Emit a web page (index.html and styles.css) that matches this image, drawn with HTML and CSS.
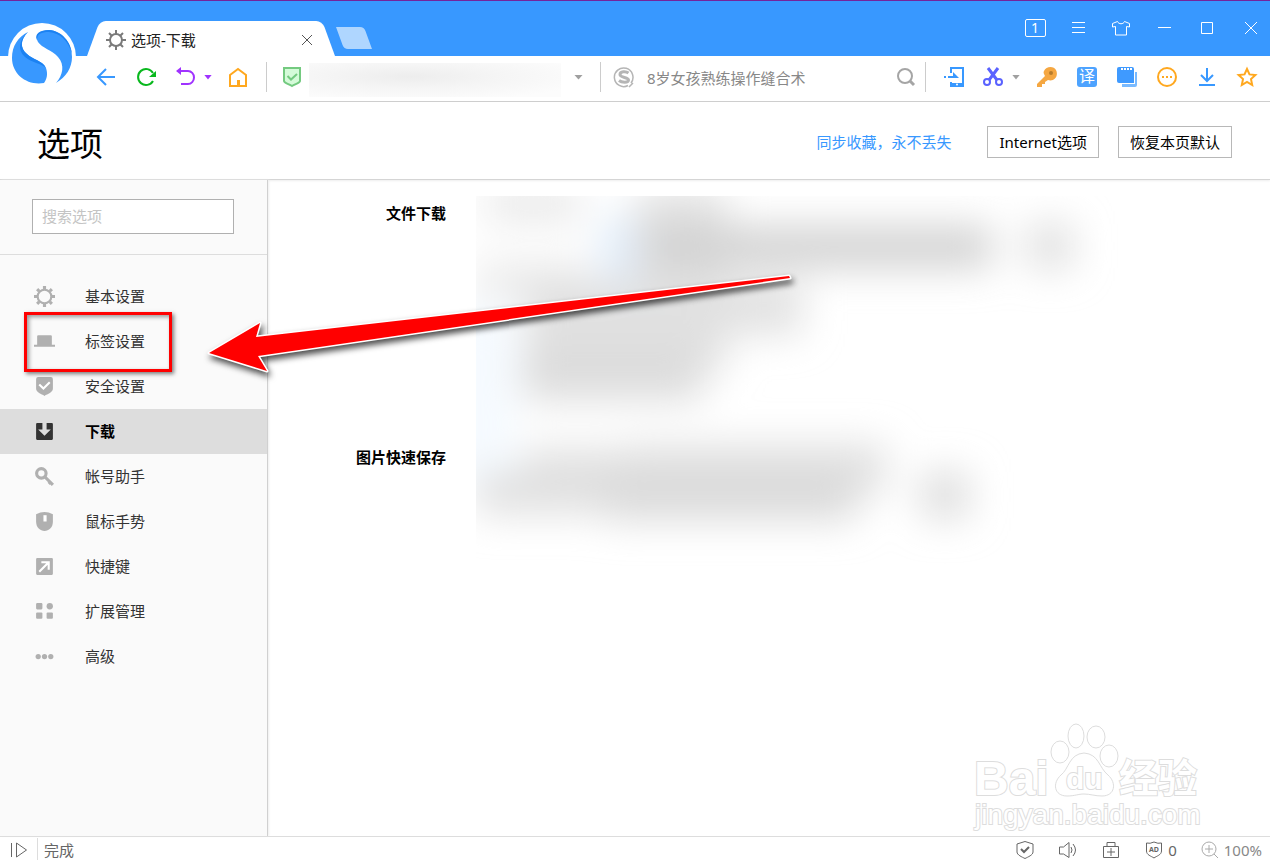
FILE: index.html
```
<!DOCTYPE html>
<html lang="zh-CN">
<head>
    <meta charset="UTF-8">
    <title>选项-下载</title>
    <link rel="stylesheet" href="styles.css">
</head>
<body>
    <div class="browser">
        <svg class="logo" viewBox="0 0 84 96">
            <circle cx="42" cy="57" r="34" fill="#fff"/>
            <path fill="#3898ff" d="M28 32C20 40 20 48 27 54C33 60 42 60 46 68C48 74 47 79 44 83C28 86 12 75 12 58C12 46 18 37 28 32Z"/>
            <path fill="#1c82f2" d="M28 32C20 40 20 48 27 54C33 60 42 60 46 68C43 64 32 63 25 57C17 50 19 40 28 32Z"/>
            <path fill="#3898ff" d="M56 83C63 75 65 65 58 57C52 50 42 48 38 42C34 35 40 30 49 30C62 31 72 43 72 57C72 68 66 77 56 83Z"/>
            <path fill="#1c82f2" d="M37 40C34 34 40 30 49 30C62 31 71 42 72 54C68 40 60 33 49 32C41 32 37 34 37 40Z"/>
        </svg>

        <div class="titlebar">
            <div class="tab">
                <svg width="20" height="20" viewBox="0 0 20 20" fill="none" stroke="#7a7a7a" stroke-width="2">
                    <circle cx="10" cy="10" r="6"/>
                    <path d="M10 0v4M10 16v4M0 10h4M16 10h4M3 3l3 3M14 14l3 3M17 3l-3 3M3 17l3-3"/>
                </svg>
                <span class="tab-title">选项-下载</span>
                <button class="tab-close" aria-label="关闭标签">
                    <svg width="12" height="12" viewBox="0 0 12 12" stroke="#555" fill="none"><path d="M1 1l10 10M11 1L1 11"/></svg>
                </button>
            </div>
            <button class="new-tab" aria-label="新标签"></button>
            <div class="window-buttons">
                <button class="count"><span>1</span></button>
                <button aria-label="菜单"><svg width="20" height="20" viewBox="0 0 20 20"><path d="M4 4.500h13M4 9.500h13M4 14.500h13"/></svg></button>
                <button aria-label="皮肤"><svg width="20" height="20" viewBox="0 0 20 20"><path d="M6.500 3.500L1.500 5.500v3.500l3-.5v8.500h11V8.500l3 .5V5.500L13.500 3.500C12.500 6.500 7.500 6.500 6.500 3.500Z"/></svg></button>
                <button aria-label="最小化"><svg width="20" height="20" viewBox="0 0 20 20"><path d="M4 9.500h13"/></svg></button>
                <button aria-label="最大化"><svg width="20" height="20" viewBox="0 0 20 20"><path d="M4.500 4.500h11v11h-11z"/></svg></button>
                <button aria-label="关闭"><svg width="20" height="20" viewBox="0 0 20 20"><path d="M5 4l12 12M17 4L5 16"/></svg></button>
            </div>
        </div>

        <div class="toolbar">
            <button class="tool" aria-label="后退"><svg width="20" height="20" viewBox="0 0 20 20" fill="none" stroke="#3898ff" stroke-width="2"><path d="M19 10H2M10 2L2 10l8 8"/></svg></button>
            <button class="tool" aria-label="刷新"><svg width="20" height="20" viewBox="0 0 20 20" fill="none" stroke="#09b81e" stroke-width="2"><path d="M17 14A8 8 0 1 1 17 6"/><path fill="#09b81e" stroke="none" d="M20 4v6h-7z"/></svg></button>
            <button class="tool undo" aria-label="恢复"><svg width="20" height="20" viewBox="0 0 20 20" fill="none" stroke="#a033ff" stroke-width="2"><path d="M2 4h11a6 6.500 0 0 1 0 13H6"/><path fill="#a033ff" stroke="none" d="M6 0v8L1 4z"/></svg></button>
            <button class="caret purple" aria-label="恢复列表"></button>
            <button class="tool" aria-label="主页"><svg width="20" height="20" viewBox="0 0 20 20" fill="none" stroke="#ffa81f" stroke-width="2"><path d="M2 8l8-6 8 6v11H2z"/><path stroke-width="3" d="M10.500 18v-5"/></svg></button>
            <div class="address">
                <svg width="20" height="22" viewBox="0 0 20 22" fill="#d5fbd9" stroke="#74ca80" stroke-width="2"><path d="M2 2h16v13c0 2-5 3-8 5c-3-2-8-3-8-5z"/><path fill="none" d="M5.500 10l3.500 3.500L15 8"/></svg>
                <input class="url" type="text" aria-label="地址">
                <button class="caret" aria-label="地址列表"></button>
            </div>
            <div class="search">
                <svg width="22" height="22" viewBox="0 0 22 22" fill="none" stroke="#b5b5b5"><path stroke-width="1.500" d="M15 19.500a9.300 9.300 0 1 1 3-2.500M16 21l4-4"/><path stroke-width="3" d="M15.500 7C13 5 7 5 7 8.500S15.500 11 15.500 14S8.500 16.500 6 14.500"/></svg>
                <input type="text" aria-label="搜索" placeholder="8岁女孩熟练操作缝合术">
                <button aria-label="搜索"><svg width="20" height="20" viewBox="0 0 20 20" fill="none" stroke="#a5a5a5" stroke-width="2"><circle cx="9" cy="9" r="7"/><path stroke-width="3" d="M14 14l4 4"/></svg></button>
            </div>
            <div class="plugins">
                <button class="tool" aria-label="发送到手机"><svg width="22" height="22" viewBox="0 0 22 22" fill="none" stroke="#3898ff" stroke-width="2"><path d="M8 7V2h12v18H8v-4"/><path d="M8 18.500h12" stroke-width="3"/><path d="M1 11h2M5 11h5"/><path fill="#3898ff" stroke="none" d="M10 6l6 6h-6z"/><circle cx="14" cy="18.500" r="1" fill="#fff" stroke="none"/></svg></button>
                <button class="tool cut" aria-label="截图"><svg width="20" height="20" viewBox="0 0 20 20" fill="none" stroke="#5a62ff" stroke-width="2"><circle cx="4" cy="15" r="3"/><circle cx="16" cy="15" r="3"/><path stroke-width="3" d="M5 1l9 12M15 1L6 13"/></svg></button>
                <button class="caret small" aria-label="截图列表"></button>
                <button class="tool" aria-label="登录管家"><svg width="22" height="22" viewBox="0 0 22 22"><path fill="#f5a742" d="M8 5C10 0 18 0 20 4c3 6-2 12-8 10l-3 2v2H6v3H1v-3l8-8C8 8 7 7 8 5Z"/><circle cx="15" cy="7" r="2" fill="#b87c2c"/></svg></button>
                <button class="tool" aria-label="翻译"><span class="translate">译</span></button>
                <button class="tool" aria-label="窗口"><svg width="22" height="22" viewBox="0 0 22 22"><path fill="#3f9aff" d="M1 3q0-2 2-2h13q2 0 2 2v14H3q-2 0-2-2z"/><path fill="#79baff" d="M19 6h2v13q0 2-2 2H6v-3h13z"/><path stroke="#fff" stroke-width="2" stroke-dasharray="2 1" d="M5 3h11"/></svg></button>
                <button class="tool" aria-label="更多"><svg width="22" height="22" viewBox="0 0 22 22" fill="none" stroke="#ffa81f" stroke-width="2"><circle cx="11" cy="11" r="9"/><path stroke-dasharray="2 2" d="M6 11h10"/></svg></button>
                <button class="tool" aria-label="下载"><svg width="20" height="20" viewBox="0 0 20 20" fill="none" stroke="#3898ff" stroke-width="2"><path d="M10 1v13M4 8l6 6 6-6M2 18h16"/></svg></button>
                <button class="tool" aria-label="收藏"><svg width="22" height="22" viewBox="0 0 22 22" fill="none" stroke="#ffa81f" stroke-width="2"><path d="M11 3l2.500 5.400 5.900.7-4.400 4 1.200 5.900-5.200-3-5.200 3 1.200-5.900-4.400-4 5.900-.7z"/></svg></button>
            </div>
        </div>

        <header class="header">
            <h1>选项</h1>
            <a href="#">同步收藏，永不丢失</a>
            <button>Internet选项</button>
            <button>恢复本页默认</button>
        </header>

        <div class="main">
            <aside class="sidebar">
                <div class="filter"><input type="text" placeholder="搜索选项" aria-label="搜索选项"></div>
                <nav>
                    <a href="#"><svg viewBox="0 0 20 20" fill="none" stroke="#b0b0b0" stroke-width="3"><circle cx="10" cy="10" r="6.500" stroke-width="2"/><path d="M10 0v3M10 17v3M0 10h3M17 10h3M3 3l2 2M15 15l2 2M17 3l-2 2M3 17l2-2"/></svg>基本设置</a>
                    <a href="#"><svg viewBox="0 0 20 20" fill="#b0b0b0"><path d="M3 5q0-1 1-1h12q1 0 1 1v8h3v2H0v-2h3z"/></svg>标签设置</a>
                    <a href="#"><svg viewBox="0 0 20 20" fill="#b0b0b0"><path d="M2 3q0-2 2-2h12q2 0 2 2v9c0 4-5 5-8 7c-3-2-8-3-8-7z"/><path d="M5 8l4 4 6-6" fill="none" stroke="#fff" stroke-width="2"/></svg>安全设置</a>
                    <a href="#" class="active"><svg viewBox="0 0 20 20" fill="#333"><path d="M3 2h5v6H4l6 6 6-6h-4V2h5q1 0 1 1v14q0 1-1 1H3q-1 0-1-1V3q0-1 1-1z"/></svg>下载</a>
                    <a href="#"><svg viewBox="0 0 20 20" fill="none" stroke="#b0b0b0"><circle cx="7" cy="7" r="4.500" stroke-width="3"/><path stroke-width="3" d="M10 10l8 8M14 17l2-2"/></svg>帐号助手</a>
                    <a href="#"><svg viewBox="0 0 20 20"><path fill="#b0b0b0" d="M2 3Q10-1 18 3v7C18 22 2 22 2 10z"/><path fill="#fff" d="M9 4h3v6H9z"/></svg>鼠标手势</a>
                    <a href="#"><svg viewBox="0 0 20 20"><rect x="2" y="2" width="16" height="16" rx="1" fill="#b0b0b0"/><path fill="none" stroke="#fff" stroke-width="2" d="M5 15L14 6M7 6h7v7"/></svg>快捷键</a>
                    <a href="#"><svg viewBox="0 0 20 20" fill="#b0b0b0"><rect x="2" y="2" width="6" height="6" rx="1"/><circle cx="15" cy="5" r="3"/><rect x="2" y="11" width="6" height="6" rx="1"/><rect x="12" y="11" width="6" height="6" rx="1"/></svg>扩展管理</a>
                    <a href="#"><svg viewBox="0 0 20 20" fill="#b0b0b0"><circle cx="4" cy="10" r="2.500"/><circle cx="10" cy="10" r="2.500"/><circle cx="16" cy="10" r="2.500"/></svg>高级</a>
                </nav>
            </aside>

            <main class="content">
                <h2>文件下载</h2>
                <h2>图片快速保存</h2>
                <!-- blurred settings -->
                <svg class="blurred" viewBox="0 0 660 370">
                    <defs>
                        <filter id="blur" x="-30%" y="-30%" width="160%" height="160%"><feGaussianBlur stdDeviation="19"/></filter>
                    </defs>
                    <g filter="url(#blur)" fill="#e1e1e1">
                        <rect x="10" y="-10" width="95" height="36" fill="#e9e9e9"/>
                        <rect x="160" y="-6" width="90" height="90"/>
                        <rect x="170" y="30" width="346" height="42" fill="#d2d2d2"/>
                        <rect x="552" y="28" width="44" height="44" fill="#dedede"/>
                        <rect x="124" y="20" width="34" height="80" fill="#e1edfa"/>
                        <rect x="0" y="64" width="110" height="40" fill="#ececec"/>
                        <rect x="50" y="84" width="200" height="90"/>
                        <rect x="200" y="86" width="126" height="52"/>
                        <rect x="-30" y="110" width="68" height="180" fill="#f5faff"/>
                        <rect x="46" y="150" width="180" height="54" fill="#dcdcdc"/>
                        <rect x="46" y="252" width="120" height="36"/>
                        <rect x="150" y="248" width="260" height="50"/>
                        <rect x="0" y="276" width="150" height="42" fill="#e0e0e0"/>
                        <rect x="130" y="276" width="250" height="48" fill="#dadada"/>
                        <rect x="446" y="276" width="46" height="46" fill="#dcdcdc"/>
                    </g>
                </svg>
            </main>
        </div>

        <footer class="statusbar">
            <button class="side-toggle" aria-label="侧边栏"><svg width="18" height="18" viewBox="0 0 18 18"><path d="M1.500 2v14M6.500 2v14l10-7z"/></svg></button>
            <span class="state">完成</span>
            <button aria-label="安全"><svg width="18" height="18" viewBox="0 0 18 18"><path d="M9 .5L17 3v8c0 3-5 5-8 6.500C6 16 1 14 1 11V3z"/><path stroke-width="2" d="M5 8l3 3 5-5"/></svg></button>
            <button aria-label="声音"><svg width="18" height="18" viewBox="0 0 18 18"><path d="M.5 6h4L10 1.500v15L4.500 13h-4zM12 6q2 3 0 6M14 3q5 6 0 12"/></svg></button>
            <button aria-label="工具箱"><svg width="18" height="18" viewBox="0 0 18 18"><path d="M1.500 5.500h15v11h-15zM5 5V1.500h8V5M9 7v8M5 11h8"/></svg></button>
            <button class="ads"><svg width="16" height="18" viewBox="0 0 16 18"><path d="M8 1q4 2 7.500 1v8c0 4-5 5-7.500 7C5 15 .5 14 .5 10V2Q4 3 8 1z"/><text x="8" y="11">AD</text></svg>0</button>
            <button class="zoom"><svg width="18" height="18" viewBox="0 0 18 18"><circle cx="8" cy="8" r="7"/><path d="M8 4v8M4 8h8M13 13l4 4"/></svg>100%</button>
        </footer>

        <div class="highlight"></div>
        <svg class="arrow" width="600" height="120" viewBox="0 0 600 120">
            <path class="edge" d="M9 83L60 53 56 67 589 6 590 8 58 86 67 101Z"/>
            <path d="M9 83L60 53 56 67 589 6 590 8 58 86 67 101Z"/>
        </svg>
        <svg class="watermark" width="235" height="114" viewBox="0 0 235 114">
            <text class="wm-latin" x="4" y="75">Bai</text>
            <ellipse cx="90" cy="32" rx="9" ry="11"/>
            <ellipse cx="106" cy="16" rx="8" ry="12"/>
            <ellipse cx="126" cy="17" rx="9" ry="11"/>
            <ellipse cx="139" cy="36" rx="9" ry="11"/>
            <path d="M114 33C99 34 99 49 91 55C82 63 84 76 97 76C105 76 108 74 114 74C120 74 125 76 132 76C145 76 147 63 138 55C129 48 129 34 114 33Z"/>
            <text class="wm-du" x="96" y="69">du</text>
            <text class="wm-cjk" x="149" y="72">经验</text>
            <text class="wm-url" x="5" y="104">jingyan.baidu.com</text>
        </svg>
    </div>
</body>
</html>
```
FILE: styles.css
```
* { box-sizing: border-box; }
body { margin: 0; font-family: "Noto Sans", "Noto Sans CJK SC", sans-serif; font-size: 15px; color: #333; background: #fff; }
button { display: flex; align-items: center; justify-content: center; padding: 0; border: none; background: none; font: inherit; color: inherit; cursor: pointer; }
input { font: inherit; border: none; outline: none; padding: 0; min-width: 0; background: none; }
a { text-decoration: none; }
svg { flex: none; }
.browser { position: relative; display: flex; flex-direction: column; min-height: 100vh; overflow: hidden; }
.logo { position: absolute; left: 0; top: 0; width: 84px; height: 96px; z-index: 2; }

/* title bar */
.titlebar { display: flex; align-items: flex-end; height: 56px; padding-left: 87px; background: #3898ff; border-top: 1px solid #74249c; }
.tab { position: relative; z-index: 0; display: flex; align-items: center; width: 248px; height: 35px; padding: 2px 22px 0 19px; }
.tab::before, .tab::after { content: ""; position: absolute; z-index: -1; top: 0; bottom: 0; width: 60%; background: #fff; transform-origin: bottom; }
.tab::before { left: 0; transform: skewX(-20deg); border-top-left-radius: 6px; }
.tab::after { right: 0; transform: skewX(20deg); border-top-right-radius: 6px; }
.tab-title { flex: 1; margin-left: 5px; color: #222; }
.new-tab { width: 28px; height: 22px; margin: 0 0 7px 5px; background: #afd6ff; transform: skewX(20deg); border-radius: 0 4px 0 4px; }
.window-buttons { display: flex; margin-left: auto; align-self: stretch; padding-bottom: 2px; }
.window-buttons button { width: 43px; margin-right: -1px; padding-left: 1px; color: #fff; }
.window-buttons button { margin-right: 0; padding-left: 3px; }
.window-buttons svg { fill: none; stroke: #fff; }
.count span { width: 21px; height: 18px; line-height: 16px; border: 1px solid #fff; border-radius: 2px; font-size: 14px; }

/* toolbar */
.toolbar { display: flex; align-items: center; height: 46px; padding: 0 3px 3px 86px; border-bottom: 1px solid #ccc; }
.tool { width: 40px; height: 30px; }
.undo, .cut { width: 38px; }
.caret { width: 8px; height: 5px; background: #a0a0a0; clip-path: polygon(0 0, 100% 0, 50% 100%); }
.caret.purple { margin-right: 6px; background: #a033ff; }
.caret.small { margin-right: 7px; }
.address { display: flex; flex: 1; align-items: center; height: 30px; margin-left: 8px; padding: 0 17px 0 15px; border-left: 1px solid #ccc; }
.address .caret { margin-left: 13px; width: 9px; }
.url { flex: 1; height: 34px; margin: 6px 0 0 7px; background: radial-gradient(ellipse at 40% 40%, #ededed, #f5f5f5 40%, #fcfcfc 85%); }
.search { display: flex; align-items: center; width: 326px; height: 30px; padding: 0 9px 0 12px; border: 1px solid #ccc; border-width: 0 1px; }
.search input { flex: 1; margin: 2px 0 0 12px; }
.search input::placeholder { color: #888; opacity: 1; }
.plugins { display: flex; align-items: center; padding-left: 8px; }
.translate { width: 20px; height: 20px; border-radius: 3px; background: #4da3ff; color: #fff; font-size: 16px; line-height: 19px; text-align: center; }

/* page header */
.header { display: flex; align-items: center; height: 78px; padding: 2px 38px 0 37px; border-bottom: 1px solid #d5d5d5; box-shadow: 0 1px 2px #eee; }
.header h1 { flex: 1; margin: 0; font-size: 33px; font-weight: 400; line-height: 48px; color: #000; padding-top: 4px; }
.header a { margin-right: 17px; color: #3898ff; }
.header button { height: 32px; margin-left: 19px; padding: 0 11px; border: 1px solid #b8b8b8; background: #fff; color: #000; }

/* sidebar */
.main { display: flex; flex: 1; }
.sidebar { width: 268px; background: #fafafa; border-right: 1px solid #d0d0d0; box-shadow: 1px 0 2px #eee; }
.filter { padding: 19px 33px 20px 32px; border-bottom: 1px solid #ddd; }
.filter input { display: block; width: 100%; height: 35px; padding: 0 9px 1px; border: 1px solid #b0b0b0; background: #fff; }
.filter input::placeholder { color: #c4c4c4; opacity: 1; }
nav { padding-top: 19px; }
nav a { display: flex; align-items: center; height: 45px; padding: 0 0 2px 34px; color: #333; }
nav svg { width: 21px; height: 21px; margin: 2px 30px 0 0; }
nav a.active { background: #ddd; color: #000; font-weight: bold; }

/* content */
.content { display: grid; flex: 1; grid-template-columns: 178px 1fr; grid-template-rows: 244px 1fr; column-gap: 30px; align-items: start; padding-top: 16px; }
.content h2 { grid-column: 1; margin: 0; padding-top: 5px; font-size: 15px; line-height: 24px; text-align: right; color: #000; }
.blurred { grid-column: 2; grid-row: 1 / 3; width: 660px; height: 370px; }

/* status bar */
.statusbar { display: flex; align-items: center; height: 24px; padding: 2px 8px 0 0; border-top: 1px solid #ddd; color: #666; }
.statusbar svg { fill: none; stroke: #666; }
.statusbar button { width: 43px; height: 24px; }
.statusbar .side-toggle { width: 38px; border-right: 1px solid #ddd; }
.statusbar .state { flex: 1; margin-left: 6px; }
.statusbar .ads { gap: 6px; width: auto; margin-left: 14px; }
.statusbar .ads text { fill: #666; stroke: none; font-size: 7px; font-weight: bold; text-anchor: middle; }
.statusbar .zoom { gap: 5px; width: auto; margin-left: 24px; color: #888; }
.statusbar .zoom svg { stroke: #aaa; }

/* annotations over the page */
.highlight { position: absolute; left: 24px; top: 312px; width: 148px; height: 60px; border: 3px solid #f00; box-shadow: 2px 2px 4px rgba(0,0,0,0.5), inset 2px 2px 4px rgba(0,0,0,0.4); pointer-events: none; }
.arrow { position: absolute; left: 200px; top: 270px; pointer-events: none; filter: drop-shadow(2px 4px 3px rgba(0,0,0,0.7)); }
.arrow path { fill: #f00; }
.arrow .edge { stroke: #fff; stroke-width: 3; stroke-linejoin: round; }
.watermark { position: absolute; right: 65px; bottom: 26px; fill: #fff; stroke: #ddd; stroke-width: 1; pointer-events: none; }
.watermark text { font-family: "Liberation Sans", "Noto Sans CJK SC", sans-serif; paint-order: stroke; stroke-width: 2; }
.wm-latin { font-size: 48px; font-weight: bold; }
.wm-du { font-size: 30px; font-weight: bold; }
.wm-cjk { font-size: 39px; font-weight: bold; }
.wm-url { font-size: 28px; }
```
